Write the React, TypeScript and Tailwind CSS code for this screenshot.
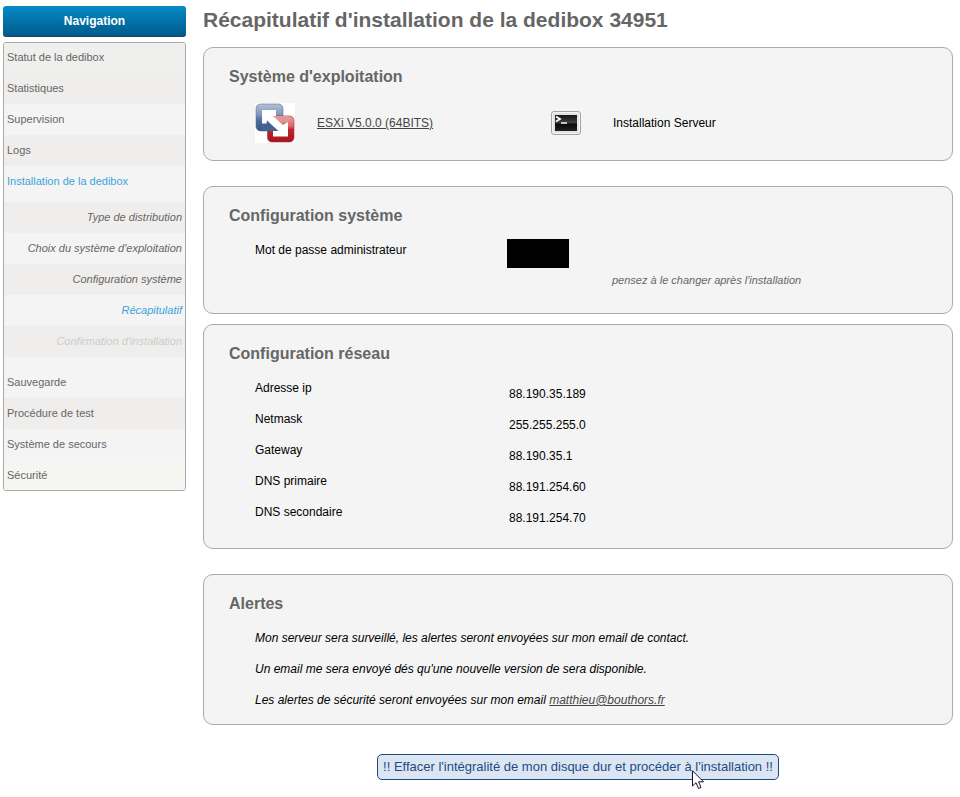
import clsx from 'clsx'

interface NavItem {
  label: string
  className: string
}

interface NetworkRow {
  label: string
  value: string
}

const topItems: NavItem[] = [
  { label: 'Statut de la dedibox', className: 'bg-[#efefed] h-[30px] leading-[29px]' },
  { label: 'Statistiques', className: 'bg-[#efeeec] h-[31px]' },
  { label: 'Supervision', className: 'bg-[#f4f4f4] h-[31px]' },
  { label: 'Logs', className: 'bg-[#efeeec] h-[31px]' },
  { label: 'Installation de la dedibox', className: 'bg-[#f4f4f4] h-[36px] text-[#3ba4d8]' },
]

const installSteps: NavItem[] = [
  { label: 'Type de distribution', className: 'bg-[#efeeec]' },
  { label: "Choix du système d'exploitation", className: 'bg-[#f4f4f4]' },
  { label: 'Configuration système', className: 'bg-[#efeeec]' },
  { label: 'Récapitulatif', className: 'bg-[#f4f4f4] text-[#3ba4d8]' },
  { label: "Confirmation d'installation", className: 'bg-[#efeeec] text-[#cccccc]' },
]

const bottomItems: NavItem[] = [
  { label: 'Sauvegarde', className: 'bg-[#f4f4f4] pt-[10px] h-[41px]' },
  { label: 'Procédure de test', className: 'bg-[#efeeec] h-[31px]' },
  { label: 'Système de secours', className: 'bg-[#f4f4f4] h-[31px]' },
  { label: 'Sécurité', className: 'bg-[#f5f5f2] h-[30px]' },
]

const network: NetworkRow[] = [
  { label: 'Adresse ip', value: '88.190.35.189' },
  { label: 'Netmask', value: '255.255.255.0' },
  { label: 'Gateway', value: '88.190.35.1' },
  { label: 'DNS primaire', value: '88.191.254.60' },
  { label: 'DNS secondaire', value: '88.191.254.70' },
]

function VmwareIcon() {
  return (
    <svg viewBox="0 0 40 40" className="size-10 shrink-0" aria-hidden="true">
      <defs>
        <linearGradient id="vm-blue" x1="0" y1="0" x2="0" y2="1">
          <stop offset="0" stopColor="#b4c1d6" />
          <stop offset="0.4" stopColor="#7f95ba" />
          <stop offset="0.6" stopColor="#4f6b9c" />
          <stop offset="1" stopColor="#385586" />
        </linearGradient>
        <linearGradient id="vm-red" x1="0" y1="0" x2="0" y2="1">
          <stop offset="0" stopColor="#e8a3a5" />
          <stop offset="0.4" stopColor="#d9666a" />
          <stop offset="0.52" stopColor="#bd252d" />
          <stop offset="1" stopColor="#a5151f" />
        </linearGradient>
      </defs>
      <rect width="40" height="40" fill="#fff" />
      <rect x="1" y="1" width="27" height="27" rx="4.5" fill="url(#vm-blue)" stroke="#5d7497" strokeWidth="0.6" />
      <rect x="12.5" y="13" width="26.5" height="26" rx="4.5" fill="url(#vm-red)" stroke="#a52b32" strokeWidth="0.6" />
      {/* blue frame corner in front of the red frame */}
      <path fill="#456294" d="M7 20L12 16L24 28H7Z" />
      <path fill="#fff" d="M7 7H21V13H18L28 22L33 19V33.5H18V28H23.5L12 17.5L11.5 20.5H7Z" />
      <path fill="#e29699" d="M18.5 13H33.5V19H25.5Z" />
    </svg>
  )
}

function TerminalIcon() {
  return (
    <svg viewBox="0 0 30 24" className="h-6 w-[30px] shrink-0" aria-hidden="true">
      <defs>
        <linearGradient id="term-screen" x1="0" y1="0" x2="0" y2="1">
          <stop offset="0" stopColor="#151515" />
          <stop offset="0.5" stopColor="#3c3f40" />
          <stop offset="0.55" stopColor="#090909" />
          <stop offset="1" stopColor="#202020" />
        </linearGradient>
      </defs>
      <rect x="0.5" y="0.5" width="29" height="23" rx="2.5" fill="#e2e2e2" stroke="#a4a4a4" />
      <rect x="1.5" y="1.5" width="27" height="21" rx="2" fill="none" stroke="#f6f6f6" />
      <rect x="4" y="4" width="22" height="16" fill="url(#term-screen)" />
      <path d="M5 5.5L9 8L5 10.5" fill="none" stroke="#fff" strokeWidth="1.8" />
      <path d="M10 12H16" stroke="#e8eef0" strokeWidth="1.6" />
    </svg>
  )
}

function Pointer() {
  return (
    <svg
      viewBox="0 0 13 20"
      className="pointer-events-none absolute top-4 right-[74px] h-5 w-[13px]"
      aria-hidden="true"
    >
      <path
        d="M0.5 0.8V16L4 12.7L6.5 18.5L9 17.4L6.6 11.8H11.5Z"
        fill="#fff"
        stroke="#111122"
        strokeLinejoin="round"
      />
    </svg>
  )
}

function Card({ title, className, children }: { title: string; className?: string; children: React.ReactNode }) {
  return (
    <section className={clsx('rounded-[10px] border border-[#aaaaaa] bg-[#f4f4f4] px-[25px] pt-4', className)}>
      <h2 className="text-[16px] leading-[25px] font-bold text-[#666666]">{title}</h2>
      {children}
    </section>
  )
}

function Sidebar() {
  return (
    <nav className="w-[183px] shrink-0 pt-1.5 text-[11px] leading-[31px] text-[#666666]">
      <button
        type="button"
        className="block h-[31px] w-full rounded-[3px] border-b border-[#1c4460] bg-linear-to-b from-[#088ac6] to-[#005b8c] text-center text-[12px] leading-[30px] font-bold text-white"
      >
        Navigation
      </button>
      <ul className="mt-[5px] overflow-hidden rounded-[3px] border border-[#aaaaaa]">
        {topItems.map((item) => (
          <li key={item.label} className={clsx('px-[3px]', item.className)}>
            <a href="#">{item.label}</a>
          </li>
        ))}
        <li>
          <ul className="text-right italic">
            {installSteps.map((item) => (
              <li key={item.label} className={clsx('h-[31px] px-[3px]', item.className)}>
                <a href="#">{item.label}</a>
              </li>
            ))}
          </ul>
        </li>
        {bottomItems.map((item) => (
          <li key={item.label} className={clsx('px-[3px]', item.className)}>
            <a href="#">{item.label}</a>
          </li>
        ))}
      </ul>
    </nav>
  )
}

export default function App() {
  return (
    <div className="flex gap-[17px] bg-white pr-[7px] pb-4 pl-[3px] font-['Liberation_Sans',Arial,sans-serif] text-[12px] text-black">
      <Sidebar />

      <main className="min-w-0 flex-1 pt-1">
        <h1 className="text-[21px] leading-8 font-bold text-[#666666]">
          Récapitulatif d'installation de la dedibox 34951
        </h1>

        {/* Operating system */}
        <Card title="Système d'exploitation" className="mt-[11px] pb-[17px]">
          <div className="mt-[14px] flex items-center pl-[26px]">
            <div className="flex w-[296px] items-center gap-[22px]">
              <VmwareIcon />
              <a href="#" className="text-[#444444] underline">
                ESXi V5.0.0 (64BITS)
              </a>
            </div>
            <div className="flex items-center gap-8">
              <TerminalIcon />
              <span>Installation Serveur</span>
            </div>
          </div>
        </Card>

        {/* Administrator password */}
        <Card title="Configuration système" className="mt-[25px] pb-5">
          <div className="mt-[7px] grid grid-cols-[252px_1fr] pl-[26px] leading-[31px]">
            <span>Mot de passe administrateur</span>
            <div className="pt-1">
              <div className="h-[29px] w-[62px] bg-black" />
              <p className="pl-[105px] text-[11px] leading-[25px] text-[#666666] italic">
                pensez à le changer après l'installation
              </p>
            </div>
          </div>
        </Card>

        {/* Network */}
        <Card title="Configuration réseau" className="mt-[10px] pb-5">
          <dl className="mt-[7px] pl-[26px] leading-[31px]">
            {network.map((row) => (
              <div key={row.label} className="grid h-[31px] grid-cols-[254px_1fr]">
                <dt>{row.label}</dt>
                <dd className="pt-1.5">{row.value}</dd>
              </div>
            ))}
          </dl>
        </Card>

        {/* Alerts */}
        <Card title="Alertes" className="mt-[25px] pb-2">
          <div className="mt-[7px] pl-[26px] leading-[31px] italic">
            <p>Mon serveur sera surveillé, les alertes seront envoyées sur mon email de contact.</p>
            <p>Un email me sera envoyé dés qu'une nouvelle version de sera disponible.</p>
            <p>
              Les alertes de sécurité seront envoyées sur mon email{' '}
              <a href="mailto:matthieu@bouthors.fr" className="text-[#444444] underline">
                matthieu@bouthors.fr
              </a>
            </p>
          </div>
        </Card>

        <div className="mt-[29px] flex justify-center">
          <div className="relative">
            <button
              type="button"
              className="block h-[26px] rounded-[5px] border border-[#1c4a86] bg-[#dce6f3] px-[5px] text-[13px] leading-6 text-[#1c4a86]"
            >
              !! Effacer l'intégralité de mon disque dur et procéder à l'installation !!
            </button>
            <Pointer />
          </div>
        </div>
      </main>
    </div>
  )
}
